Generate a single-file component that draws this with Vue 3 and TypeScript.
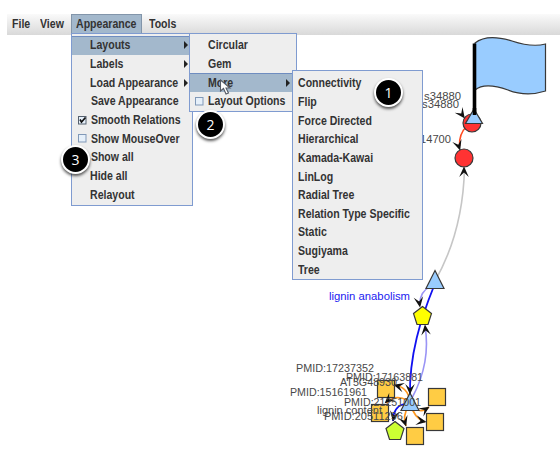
<script setup lang="ts">
interface Item {
  label: string
  sub?: boolean
  active?: boolean
  check?: 'on' | 'off'
  shift?: boolean
}

const bar = ['File', 'View', 'Appearance', 'Tools']

const appearance: Item[] = [
  { label: 'Layouts', sub: true, active: true },
  { label: 'Labels', sub: true },
  { label: 'Load Appearance', sub: true },
  { label: 'Save Appearance', shift: true },
  { label: 'Smooth Relations', check: 'on', shift: true },
  { label: 'Show MouseOver', check: 'off', shift: true },
  { label: 'Show all', shift: true },
  { label: 'Hide all' },
  { label: 'Relayout' },
]

const layouts: Item[] = [
  { label: 'Circular' },
  { label: 'Gem' },
  { label: 'More', sub: true, active: true },
  { label: 'Layout Options', check: 'off' },
]

const more: Item[] = [
  'Connectivity', 'Flip', 'Force Directed', 'Hierarchical', 'Kamada-Kawai', 'LinLog',
  'Radial Tree', 'Relation Type Specific', 'Static', 'Sugiyama', 'Tree',
].map((label) => ({ label }))

const menus = [
  { name: 'first', items: appearance },
  { name: 'second', items: layouts },
  { name: 'third', items: more },
]

const squares = [
  [377.5, 380.5], [371.5, 404.5], [428.5, 388.5], [426.5, 413.5], [406.5, 427.5],
]

const labels = [
  { x: 424, y: 100, w: 37, t: 's34880' },
  { x: 422, y: 108, w: 37, t: 's34880' },
  { x: 420, y: 143, w: 31, t: '14700' },
  { x: 296, y: 372, w: 78, t: 'PMID:17237352' },
  { x: 346, y: 381, w: 77, t: 'PMID:17163881' },
  { x: 340, y: 386, w: 57, t: 'AT5G48930' },
  { x: 290, y: 396, w: 77, t: 'PMID:15161961' },
  { x: 344, y: 406, w: 77, t: 'PMID:21251001' },
  { x: 317, y: 414, w: 65, t: 'lignin content' },
  { x: 324, y: 420, w: 79, t: 'PMID:20511296' },
]
</script>

<template>
  <main class="window">
    <svg class="graph" width="560" height="462" viewBox="0 0 560 462">
      <defs>
        <path id="head" d="M0 0.500 L-4.800 -10 L0 -5.500 L4.800 -10 Z" />
      </defs>
      <g fill="none">
        <path class="grey" d="M435 281 Q463 232 464.500 168" />
        <path class="red" d="M466 127 Q459 134 459.500 146" />
        <path class="pale" d="M431 286 Q420 291 419.500 305" />
        <path class="blue" d="M434 286 C421 318 409 355 410 397" />
        <path class="pale" d="M412 398 C425 374 429 350 425 326" />
        <path class="orange" d="M410 402 Q408 386 393 385" />
        <path class="orange" d="M407 400 Q395 394 386 403" />
        <path class="orange" d="M409 405 Q402 416 406 426" />
        <path class="orange" d="M411 405 Q414 418 425 422" />
        <path class="orange" d="M411 405 Q420 415 429 407" />
        <path class="blue" d="M404 404 Q393 407 393 421" />
      </g>
      <g class="node">
        <path class="flag" d="M475 43 C485 35 499 37 512 41 C524 45 534 47 545.500 44 V91 C533 95 521 95 508 90 C494 85 482 84 475 90 Z" />
        <circle cx="472" cy="123" r="9" />
        <circle cx="464" cy="158" r="9" />
        <rect v-for="s in squares" :key="s[0]" :x="s[0]" :y="s[1]" width="17" height="17" />
        <path class="flag" d="M435 270.500 L444 288.500 H426 Z" />
        <path class="flag" d="M410 393 L419 410.500 H401 Z" />
        <path class="yellow" d="M422.500 306.500 L431.500 313.500 L428 324.500 H417 L413.500 313.500 Z" />
        <path class="lime" d="M395 421.500 L404 428.500 L400.500 439.500 H389.500 L386 428.500 Z" />
      </g>
      <path class="pole" d="M474.500 43.500 V114" />
      <path class="flag node" d="M474 109 L482.500 123.500 H465.500 Z" />
      <path class="tip" d="M474.500 108 V115" />
      <g class="heads">
        <use href="#head" transform="translate(464.500 118) rotate(-36)" />
        <use href="#head" transform="translate(460 150) rotate(-18)" />
        <use href="#head" transform="translate(464 167) rotate(180)" />
        <use href="#head" transform="translate(420 307) rotate(-9)" />
        <use href="#head" transform="translate(425 325) rotate(174)" />
        <use href="#head" transform="translate(410 394)" />
        <use href="#head" transform="translate(394 385) rotate(105)" />
        <use href="#head" transform="translate(385 403) rotate(48)" />
        <use href="#head" transform="translate(393 421) rotate(10)" />
        <use href="#head" transform="translate(406 426) rotate(-18)" />
        <use href="#head" transform="translate(426 422) rotate(-80)" />
        <use href="#head" transform="translate(429 407) rotate(-124)" />
      </g>
      <g class="names">
        <text v-for="l in labels" :key="l.t + l.y" :x="l.x" :y="l.y" :textLength="l.w" lengthAdjust="spacingAndGlyphs">{{ l.t }}</text>
        <text class="link" x="329" y="300" textLength="81" lengthAdjust="spacingAndGlyphs">lignin anabolism</text>
      </g>
    </svg>

    <nav class="bar">
      <span v-for="b in bar" :key="b" class="title" :class="{ open: b === 'Appearance' }"><span class="label">{{ b }}</span></span>
    </nav>

    <ul v-for="m in menus" :key="m.name" class="menu" :class="m.name">
      <li v-for="i in m.items" :key="i.label" :class="{ active: i.active, shift: i.shift }">
        <span class="gutter">
          <svg v-if="i.check" width="9" height="9" viewBox="0 0 9 9">
            <rect class="box" :class="i.check" x="0.5" y="0.5" width="7.500" height="7.500" />
            <path v-if="i.check === 'on'" class="tick" d="M2 3.500 L3.500 6 L7.500 1.500" />
          </svg>
        </span>
        <span class="label">{{ i.label }}</span>
        <svg v-if="i.sub" class="arrow" width="4" height="8" viewBox="0 0 4 8"><path d="M0 0 L4 4 L0 8 Z" /></svg>
      </li>
    </ul>

    <svg class="cursor" width="13" height="18" viewBox="0 0 13 18">
      <path d="M1.500 1 V12 L4.500 9.500 L7 15 L9.500 14 L7 9 H11 Z" />
    </svg>
    <b class="badge one">1</b>
    <b class="badge two">2</b>
    <b class="badge three">3</b>
  </main>
</template>

<style>
body { background: #fff; }
</style>

<style scoped>
.window {
  position: relative;
  width: 560px;
  height: 462px;
  overflow: hidden;
  background: #fff;
  font-family: "Liberation Sans", Arial, sans-serif;
  color: #333;
}
.graph { position: absolute; left: 0; top: 0; }
.grey { stroke: #c6c6c6; stroke-width: 1.6; }
.red { stroke: #ff4a20; stroke-width: 1.6; }
.pale { stroke: #9a94f5; stroke-width: 1.6; }
.blue { stroke: #1010f0; stroke-width: 1.8; }
.orange { stroke: #ff9820; stroke-width: 1.7; }
.node { stroke: #383838; stroke-width: 1.2; }
.node circle { fill: #ff3333; }
.node rect { fill: #ffcc44; }
.flag { fill: #99ccff; }
.yellow { fill: #ffff00; }
.lime { fill: #ccff33; }
.pole, .tip { stroke: #000; stroke-width: 3.6; }
.heads { fill: #111; }
.names { font-size: 11.8px; fill: #484848; }
.names .link { fill: #1a1af0; }

.bar {
  position: relative;
  display: flex;
  box-sizing: border-box;
  height: 35px;
  padding-top: 14px;
  margin-left: 7px;
  background: linear-gradient(#fafafa, #d9d9d9) 0 14px / 100% 21px no-repeat;
  font-size: 12px;
  font-weight: 700;
  line-height: 20px;
}
.title { box-sizing: border-box; height: 19px; padding-left: 5px; white-space: nowrap; }
.title:nth-child(1) { width: 28px; }
.title:nth-child(2) { width: 36px; }
.title:nth-child(3) { width: 71px; }
.title:nth-child(4) { padding-left: 7px; }
.open { background: #a3b8cc; box-shadow: inset 1px 1px #8295aa, inset -1px 0 #8295aa; }
.label { display: inline-block; transform: scaleX(0.88); transform-origin: 0 50%; }

.menu {
  position: absolute;
  box-sizing: border-box;
  margin: 0;
  list-style: none;
  border: 1px solid #7f9bd0;
  background: #eeeeee;
  font-size: 12px;
  font-weight: 700;
}
.first { left: 71px; top: 33px; width: 122px; height: 173px; padding: 2px 0 0; }
.second { left: 189px; top: 33px; width: 108px; height: 79px; padding: 2px 0 0; }
.third { left: 292px; top: 70px; width: 131px; height: 210px; padding: 3px 0 0; }
.menu li { display: flex; align-items: center; height: 18.7px; white-space: nowrap; }
.third li { height: 18.65px; }
.menu .label { flex: 1; min-width: 0; }
.active { background: #a3b8cc; box-shadow: inset 0 1px #6f8dc0; }
.gutter { display: flex; flex: none; width: 12px; padding-left: 6px; }
.second .gutter { padding-left: 5px; width: 12.5px; }
.third .gutter { width: 5px; padding: 0; }
.shift .label { padding-left: 1px; }
.arrow { flex: none; margin-right: 4px; fill: #222; }
.second .arrow { margin-right: 6px; }
.box { fill: #e6f0fa; stroke: #8199b8; }
.box.on { stroke: #55606e; }
.tick { fill: none; stroke: #111; stroke-width: 1.7; }

.cursor { position: absolute; left: 219px; top: 79px; fill: #fff; stroke: #555b66; stroke-width: 1.1; }
.badge {
  position: absolute;
  box-sizing: border-box;
  width: 29px;
  height: 29px;
  border: 2px solid #fff;
  border-radius: 50%;
  background: #000;
  color: #fff;
  box-shadow: 0 2px 3px rgba(0, 0, 0, 0.65);
  font: 400 14px/25px "Open Sans", sans-serif;
  text-align: center;
}
.one { left: 374px; top: 78px; }
.two { left: 196px; top: 110px; }
.three { left: 61px; top: 145px; }
</style>
